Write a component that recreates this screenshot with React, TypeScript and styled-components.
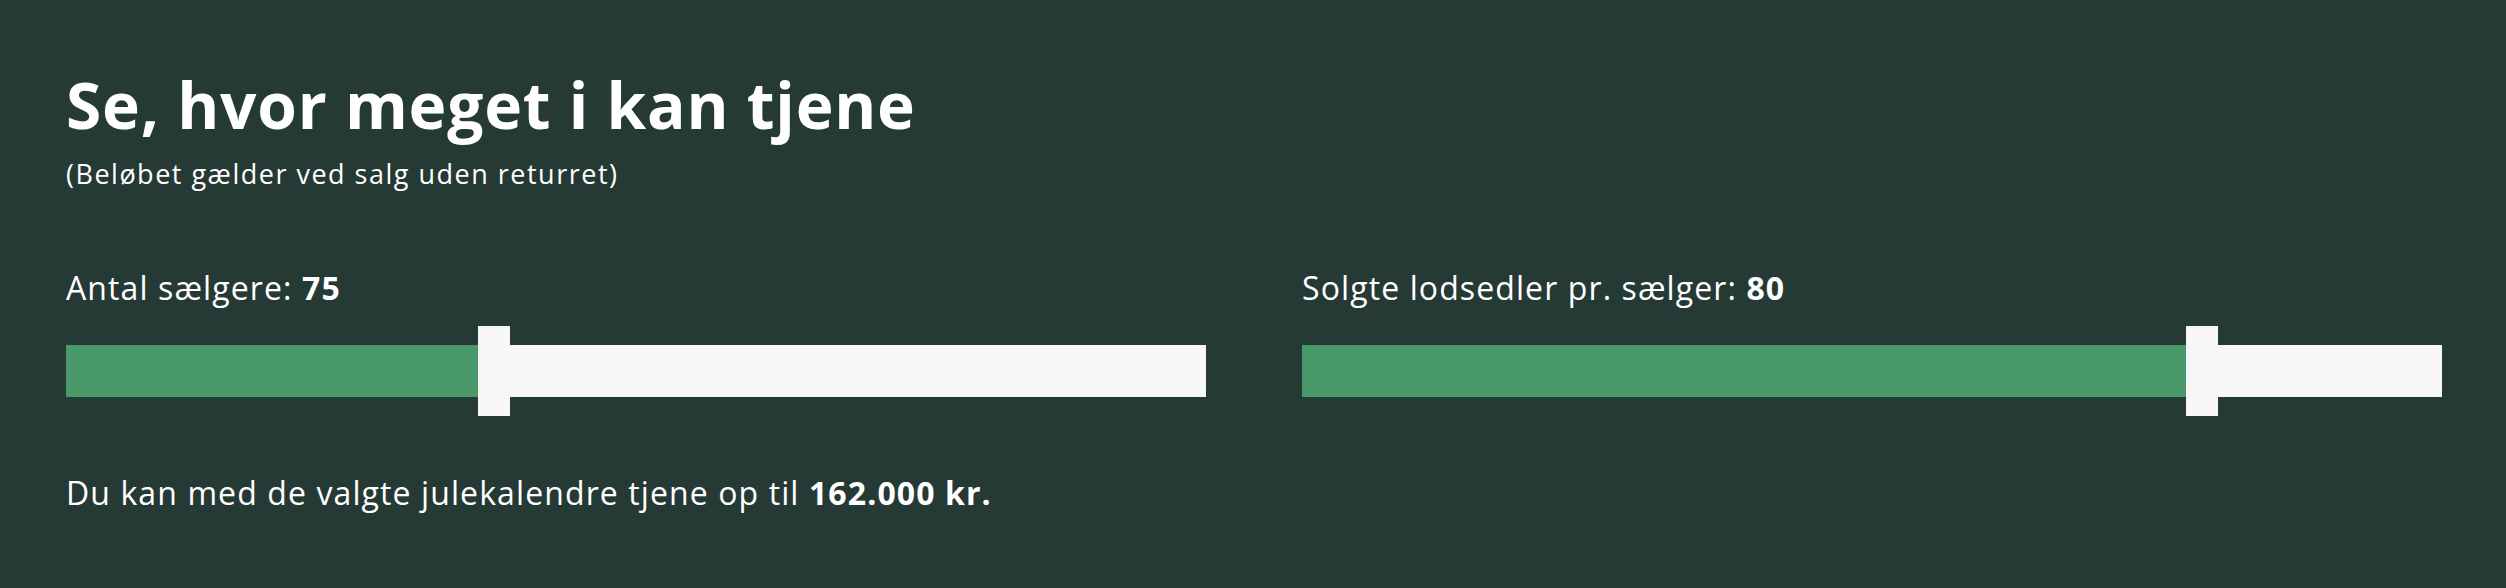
import React from "react";
import styled, { createGlobalStyle } from "styled-components";

const Global = createGlobalStyle`
  html, body { margin: 0; padding: 0; background: #263a35; }
  body { font-family: "Open Sans", "DejaVu Sans", sans-serif; color: #ffffff; }
  * { box-sizing: border-box; }
`;

const Section = styled.section`
  background: #263a35;
  padding: 67px 64px 75px 66px;
  min-height: 588px;
`;

const Title = styled.h2`
  margin: 0;
  font-size: 64px;
  line-height: 76px;
  font-weight: 700;
  letter-spacing: 0.8px;
  color: #ffffff;
`;

const Subtitle = styled.p`
  margin: 15px 0 0;
  font-size: 27px;
  line-height: 32px;
  font-weight: 400;
  letter-spacing: 1.5px;
`;

const Controls = styled.div`
  display: grid;
  grid-template-columns: 1fr 1fr;
  column-gap: 96px;
  margin-top: 78px;
`;

const Control = styled.div`
  display: flex;
  flex-direction: column;
  gap: 18px;
`;

const Label = styled.div`
  font-size: 32px;
  line-height: 40px;
  font-weight: 400;
  letter-spacing: 1.1px;
`;

const Strong = styled.strong`
  font-weight: 700;
`;

const SliderArea = styled.div`
  position: relative;
  height: 90px;
  display: flex;
  align-items: center;
`;

const Track = styled.div`
  width: 100%;
  height: 52px;
  background: #f7f7f7;
  display: flex;
`;

const Fill = styled.div`
  height: 100%;
  background: #4a996b;
`;

const Thumb = styled.div`
  position: absolute;
  top: 0;
  width: 32px;
  height: 90px;
  background: #f7f7f7;
`;

const Result = styled.p`
  margin: 57px 0 0;
  font-size: 32px;
  line-height: 40px;
  font-weight: 400;
  letter-spacing: 1.1px;
`;

type SliderProps = { label: string; value: number; min: number; max: number };

const Slider: React.FC<SliderProps> = ({ label, value, min, max }) => {
  const frac = (value - min) / (max - min);
  return (
    <Control>
      <Label>
        {label} <Strong>{value}</Strong>
      </Label>
      <SliderArea>
        <Track>
          <Fill style={{ width: `calc(${frac} * (100% - 32px) + 1px)` }} />
        </Track>
        <Thumb style={{ left: `calc(${frac} * (100% - 32px))` }} />
      </SliderArea>
    </Control>
  );
};

export default function App() {
  const sellers = 75;
  const tickets = 80;
  const total = sellers * tickets * 27;
  const formatted = total.toLocaleString("da-DK").replace(/,/g, ".");
  return (
    <>
      <Global />
      <Section>
        <Title>Se, hvor meget i kan tjene</Title>
        <Subtitle>(Beløbet gælder ved salg uden returret)</Subtitle>
        <Controls>
          <Slider label="Antal sælgere:" value={sellers} min={1} max={200} />
          <Slider label="Solgte lodsedler pr. sælger:" value={tickets} min={1} max={100} />
        </Controls>
        <Result>
          Du kan med de valgte julekalendre tjene op til <Strong>{formatted} kr.</Strong>
        </Result>
      </Section>
    </>
  );
}
